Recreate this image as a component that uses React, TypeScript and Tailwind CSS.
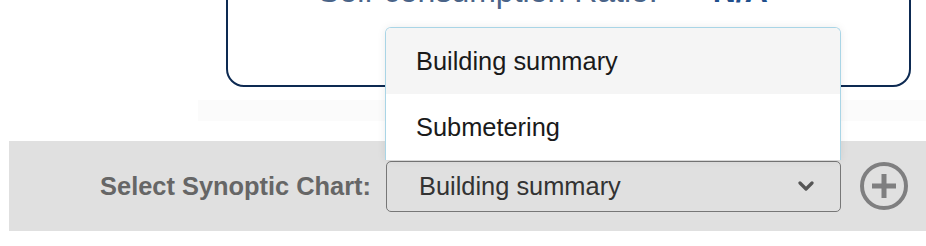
const options = ['Building summary', 'Submetering'];

export default function App() {
  return (
    <div className="relative h-[246px] w-[926px] overflow-hidden bg-white font-['Liberation_Sans',Arial,sans-serif]">
      {/* ratio card, cut by the top edge */}
      <div className="-mt-[40px] ml-[226px] h-[127px] w-[685px] rounded-[18px] border-2 border-[#0d2a52] pt-[13px]">
        <p className="whitespace-nowrap pl-[90px] text-[32px] leading-none text-[#4a6488]">
          Self-consumption Ratio:
          <span className="ml-[55px] font-bold text-[#1f4f8c]">N/A</span>
        </p>
      </div>

      <div className="ml-[198px] mt-[13px] h-[21px] bg-[#fbfbfb]" />

      {/* selector bar */}
      <div className="ml-[9px] mt-[20px] flex h-[90px] items-center bg-[#e0e0e0]">
        <label className="w-[362px] text-right text-[25.4px] font-bold text-[#666666]">
          Select Synoptic Chart:
        </label>
        <div className="ml-[15px] flex h-[51px] w-[455px] items-center justify-between rounded-[5px] border border-[#777777] pl-[32px] pr-[26px]">
          <span className="text-[25.4px] text-[#333333]">Building summary</span>
          <svg width="16" height="10" viewBox="0 0 16 10">
            <polyline
              points="2,2 8,8 14,2"
              fill="none"
              stroke="#555555"
              strokeWidth="3.2"
              strokeLinecap="round"
              strokeLinejoin="round"
            />
          </svg>
        </div>
        <button className="ml-[19px]">
          <svg width="48" height="48" viewBox="0 0 48 48" className="block">
            <circle cx="24" cy="24" r="22" fill="none" stroke="#7f7f80" strokeWidth="4" />
            <rect x="12" y="21.5" width="24" height="5" fill="#7f7f80" />
            <rect x="21.5" y="12" width="5" height="24" fill="#7f7f80" />
          </svg>
        </button>
      </div>

      {/* open menu */}
      <ul className="absolute left-[385px] top-[27px] w-[456px] overflow-hidden rounded-t-[6px] border border-b-0 border-[#a9d5e6] bg-white shadow-[0_0_8px_rgba(0,0,0,0.08)]">
        {options.map((o, i) => (
          <li
            key={o}
            className={`flex h-[66px] items-center pl-[30px] text-[25.4px] text-[#1a1a1a] ${
              i === 0 ? 'bg-[#f5f5f5]' : 'bg-white'
            }`}
          >
            {o}
          </li>
        ))}
      </ul>
    </div>
  );
}
